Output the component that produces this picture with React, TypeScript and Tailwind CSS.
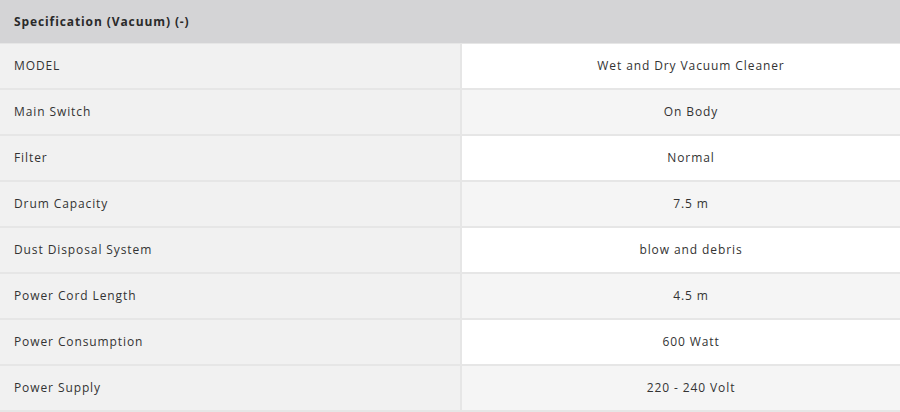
import React from "react";

const rows: [string, string][] = [
  ["MODEL", "Wet and Dry Vacuum Cleaner"],
  ["Main Switch", "On Body"],
  ["Filter", "Normal"],
  ["Drum Capacity", "7.5 m"],
  ["Dust Disposal System", "blow and debris"],
  ["Power Cord Length", "4.5 m"],
  ["Power Consumption", "600 Watt"],
  ["Power Supply", "220 - 240 Volt"],
];

export default function App() {
  return (
    <div
      className="w-[900px] h-[412px] bg-white text-[#333] overflow-hidden"
      style={{ fontFamily: '"Open Sans", "Noto Sans", sans-serif' }}
    >
      <div className="h-[44px] bg-[#d4d4d6] border-b border-[#e6e6e6] flex items-center px-[14px]">
        <span className="text-[12px] font-bold tracking-[0.9px] text-[#2a2a2a]">
          Specification (Vacuum) (-)
        </span>
      </div>
      {rows.map(([k, v], i) => (
        <div key={k} className="grid grid-cols-[462px_1fr] h-[46px] border-b-2 border-[#e6e6e6]">
          <div className="bg-[#f1f1f1] border-r-2 border-[#e6e6e6] flex items-center px-[14px] text-[12px] tracking-[0.9px] text-[#333]">
            {k}
          </div>
          <div
            className={`${i % 2 === 0 ? "bg-white" : "bg-[#f5f5f5]"} flex items-center justify-center pl-[20px] text-[12px] tracking-[0.9px] text-[#333]`}
          >
            {v}
          </div>
        </div>
      ))}
    </div>
  );
}
